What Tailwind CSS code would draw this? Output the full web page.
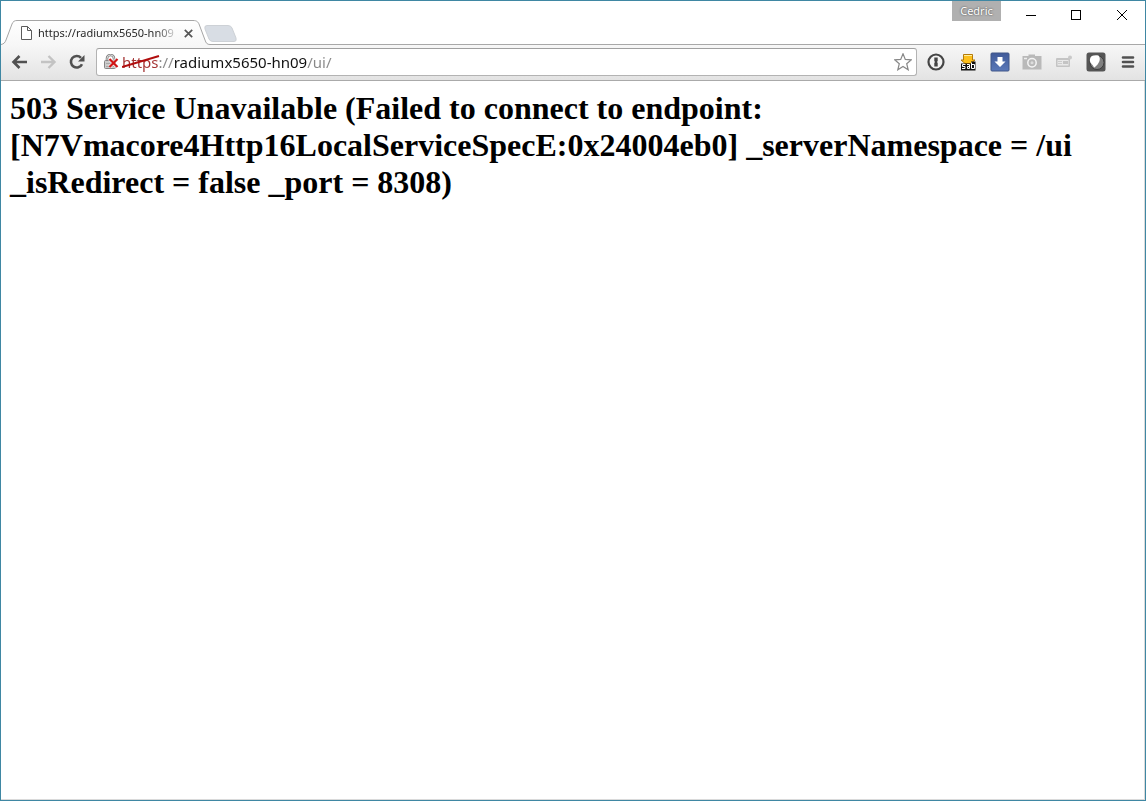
<!DOCTYPE html>
<html lang="en">
<head>
<meta charset="utf-8">
<title>https://radiumx5650-hn09/ui/</title>
<script src="https://cdn.jsdelivr.net/npm/@tailwindcss/browser@4"></script>
</head>
<body class="flex min-h-screen flex-col border border-[#3f87a3] bg-white font-['Noto_Sans',sans-serif] text-black">
<header>
  <div class="relative flex h-11 items-start justify-between">
    <svg class="absolute top-[19px] left-0 h-[25px] w-60" viewBox="0 0 240 25" fill="none" aria-hidden="true">
      <defs><linearGradient id="tab" x1="0" y1="0" x2="0" y2="1"><stop stop-color="#fff"/><stop offset="1" stop-color="#f7f7f7"/></linearGradient></defs>
      <path d="M0 25V24.500C3 24 4 22.500 5 20L11 4C12 1.500 13.500.500 16 .500H192C196 .500 197 2 198 4L204 20C205 23 206 24.500 209 24.500H240V25Z" fill="url(#tab)"/>
      <path d="M0 24.500C3 24 4 22.500 5 20L11 4C12 1.500 13.500.500 16 .500H192C196 .500 197 2 198 4L204 20C205 23 206 24.500 209 24.500H240" stroke="#a5a5a5"/>
      <path d="M206 5.500H227Q230 5.500 231 8L235 18Q236 21.500 233 21.500H212Q209 21.500 208 19L204 9Q203 5.500 206 5.500Z" fill="#d8dde4" stroke="#cdd1d6"/>
    </svg>
    <div class="relative flex h-11 w-[200px] items-center gap-1 pt-5 pl-5">
      <svg class="h-[14px] w-[12px] shrink-0" viewBox="0 0 12 14" fill="#fff" stroke="#5b5b5b" aria-hidden="true"><path d="M.500.500H6.500L10.500 4.500V13.500H.500ZM6.500.500V4.500H10.500"/></svg>
      <span class="ml-px w-[138px] overflow-hidden bg-linear-to-r from-[#222] from-85% to-[#222]/15 bg-clip-text text-[11px] whitespace-nowrap text-transparent">https://radiumx5650-hn09</span>
      <button class="flex size-4 shrink-0 items-center justify-center" aria-label="Close tab"><svg class="size-[9px]" viewBox="0 0 9 9" stroke="#555" stroke-width="1.700"><path d="M.800.800L8.200 8.200M8.200.800L.800 8.200"/></svg></button>
    </div>
    <div class="flex items-start">
      <button class="h-5 w-[49px] bg-[#b0b0b0] text-[11px] leading-5 text-white [text-shadow:0_0_2px_#333]">Cedric</button>
      <button class="ml-[7px] flex h-7 w-[45px] items-center justify-center" aria-label="Minimize"><svg class="size-[10px]" viewBox="0 0 10 10" stroke="#000" shape-rendering="crispEdges"><path d="M0 5.500H10"/></svg></button>
      <button class="flex h-7 w-[45px] items-center justify-center" aria-label="Maximize"><svg class="size-[10px]" viewBox="0 0 10 10" fill="none" stroke="#000" shape-rendering="crispEdges"><path d="M.500.500H9.500V9.500H.500Z"/></svg></button>
      <button class="flex h-7 w-[47px] items-center justify-center" aria-label="Close"><svg class="size-[10px]" viewBox="0 0 10 10" stroke="#000"><path d="M0 0L10 10M10 0L0 10"/></svg></button>
    </div>
  </div>
  <div class="relative flex h-9 items-center border-b border-[#aaa] bg-linear-to-b from-[#f7f7f7] to-[#e3e3e3] pr-[7px] pb-px pl-[10px]">
    <span class="absolute top-0 right-0 left-[210px] -mt-px h-px bg-[#a8a8a8]"></span>
    <button class="flex size-4 items-center justify-center" aria-label="Back"><svg class="size-4" viewBox="0 0 16 16" fill="none" stroke="#515151" stroke-width="2.600"><path d="M8.500 2L2.500 8L8.500 14M2.500 8H16"/></svg></button>
    <button class="ml-[14px] flex size-4 items-center justify-center" aria-label="Forward" disabled><svg class="size-4" viewBox="0 0 16 16" fill="none" stroke="#c3c3c3" stroke-width="2.400"><path d="M7.500 2L13.500 8L7.500 14M13.500 8H0"/></svg></button>
    <button class="ml-[12px] flex size-4 items-center justify-center" aria-label="Reload"><svg class="size-4" viewBox="0 0 16 16"><path d="M13 10.200A5.800 5.800 0 1 1 12 3.800" fill="none" stroke="#515151" stroke-width="2.600"/><path d="M15.500 1V7.500H9Z" fill="#515151"/></svg></button>
    <form class="ml-[11px] flex h-7 flex-1 items-center rounded-[3px] border border-[#b3b3b3] border-t-[#a0a0a0] bg-white pr-1 pl-[7px]">
      <button type="button" class="shrink-0" aria-label="Connection is not secure">
        <svg class="h-4 w-[15px]" viewBox="0 0 15 16" fill="none"><path d="M3 7V4.500A3.500 3.500 0 0 1 10 4.500V7" stroke="#858585" stroke-width="2.600"/><path d="M3 7V4.500A3.500 3.500 0 0 1 10 4.500V7" stroke="#ddd"/><rect x=".500" y="6.500" width="11" height="8" rx="1" fill="#ccc" stroke="#858585"/><path d="M2 9.500H10M2 12.500H10" stroke="#a9a9a9"/><path d="M5.500 5L13.500 13M13.500 5L5.500 13" stroke="#fff" stroke-opacity=".7" stroke-width="3.600"/><path d="M5.500 5L13.500 13M13.500 5L5.500 13" stroke="#d01414" stroke-width="2.200"/></svg>
      </button>
      <div class="relative ml-[3px] flex flex-1 items-center">
        <input type="text" aria-label="Address" value="https://radiumx5650-hn09/ui/" class="h-6 w-full bg-[linear-gradient(90deg,#a33030_0_37px,#888_37px_51px,#111_51px_185px,#888_185px)] bg-clip-text text-[15px] text-transparent caret-black outline-none">
        <svg class="pointer-events-none absolute top-1 left-0 h-4 w-[38px]" viewBox="0 0 38 16" aria-hidden="true"><path d="M0 13L37 2" stroke="#b10d0d" stroke-width="2"/></svg>
      </div>
      <button type="button" aria-label="Bookmark this page"><svg class="size-[18px]" viewBox="0 0 18 18" fill="#fff" stroke="#888" stroke-width="1.200"><path d="M9 .800L11.300 6.400L17.400 6.800L12.700 10.700L14.200 16.800L9 13.500L3.800 16.800L5.300 10.700L.600 6.800L6.700 6.400Z"/></svg></button>
    </form>
    <div class="ml-[9px] flex items-center gap-3">
      <button aria-label="1Password"><svg class="size-5" viewBox="0 0 20 20"><circle cx="10" cy="10" r="7.500" fill="#f3f3f3" stroke="#454545" stroke-width="2.200"/><path d="M8.300 5.500H11.700V9L11 10L11.700 11V14.500H8.300V11L9 10L8.300 9Z" fill="#454545"/></svg></button>
      <button aria-label="SABnzbd"><svg class="size-5" viewBox="0 0 20 20"><path d="M5.500 2.500H14.500V8H17L13 11.500H7L3 8H5.500Z" fill="#fdc01b" stroke="#b47a08"/><path d="M6 3.500H14" stroke="#fff0a0"/><path d="M3 11.500H13V9.500H17.500V18.500H3Z" fill="#111"/><path d="M7.500 12.500H4.500V14.500H7V16.500H4M9 12.500H11.500V16.500H9.500V14.500H11.500M13.500 10.500V16.500H16.500V12.500H13.500" fill="none" stroke="#fff"/></svg></button>
      <button aria-label="Download"><svg class="size-5" viewBox="0 0 20 20"><defs><linearGradient id="blue" x1="0" y1="0" x2="0" y2="1"><stop stop-color="#405a99"/><stop offset="1" stop-color="#5a78b8"/></linearGradient></defs><rect x="1" y="1" width="18" height="18" rx="1" fill="url(#blue)" stroke="#405688"/><path d="M7.500 5H12.500V9.500H15.500L10 15L4.500 9.500H7.500Z" fill="#fff"/></svg></button>
      <button aria-label="Screenshot"><svg class="size-5" viewBox="0 0 20 20"><path d="M.500 4H6.500V2.500H13V4H19.500V17.500H.500Z" fill="#b9b9b9"/><circle cx="10" cy="10.800" r="4.200" fill="none" stroke="#f4f4f4" stroke-width="1.500"/><circle cx="10" cy="10.800" r="1.500" fill="#ddd"/><path d="M2 6.500H5" stroke="#eee" stroke-width="1.500"/></svg></button>
      <button aria-label="Note"><svg class="size-5" viewBox="0 0 20 20"><rect x="2" y="6" width="14" height="9" rx="1" fill="#c4c4c4"/><path d="M3.500 8H14.500V13.500H3.500Z" fill="#e9e9e9"/><path d="M4 9.500H8M4 11.500H8" stroke="#ccc"/><rect x="9" y="9" width="5" height="3" fill="#c4c4c4"/><circle cx="16" cy="5.500" r="2" fill="#c9c9c9"/></svg></button>
      <button aria-label="Ghost"><svg class="size-5" viewBox="0 0 20 20"><rect x=".500" y=".500" width="19" height="19" rx="2.500" fill="#555"/><circle cx="11" cy="10.500" r="7" fill="#808080" stroke="#3d3d3d"/><path d="M4 7C4.500 3.500 8 3 12.500 3.500C15.500 7 13 12 8.500 15.500C7 14.500 7 13 6 12.500C4.500 11 3.500 9.500 4 7Z" fill="#fff"/></svg></button>
      <button aria-label="Menu"><svg class="size-5" viewBox="0 0 20 20" stroke="#515151" stroke-width="2.600" stroke-linecap="round"><path d="M5 5.500H15M5 10H15M5 14.500H15"/></svg></button>
    </div>
  </div>
</header>
<main class="flex-1 border-r border-b border-[#dadada] px-[9px] pt-[9px] pb-2">
  <h1 class="font-['Liberation_Serif',serif] text-[32px] leading-[37px] font-bold">503 Service Unavailable (Failed to connect to endpoint: [N7Vmacore4Http16LocalServiceSpecE:0x24004eb0] _serverNamespace = /ui _isRedirect = false _port = 8308)</h1>
</main>
</body>
</html>
